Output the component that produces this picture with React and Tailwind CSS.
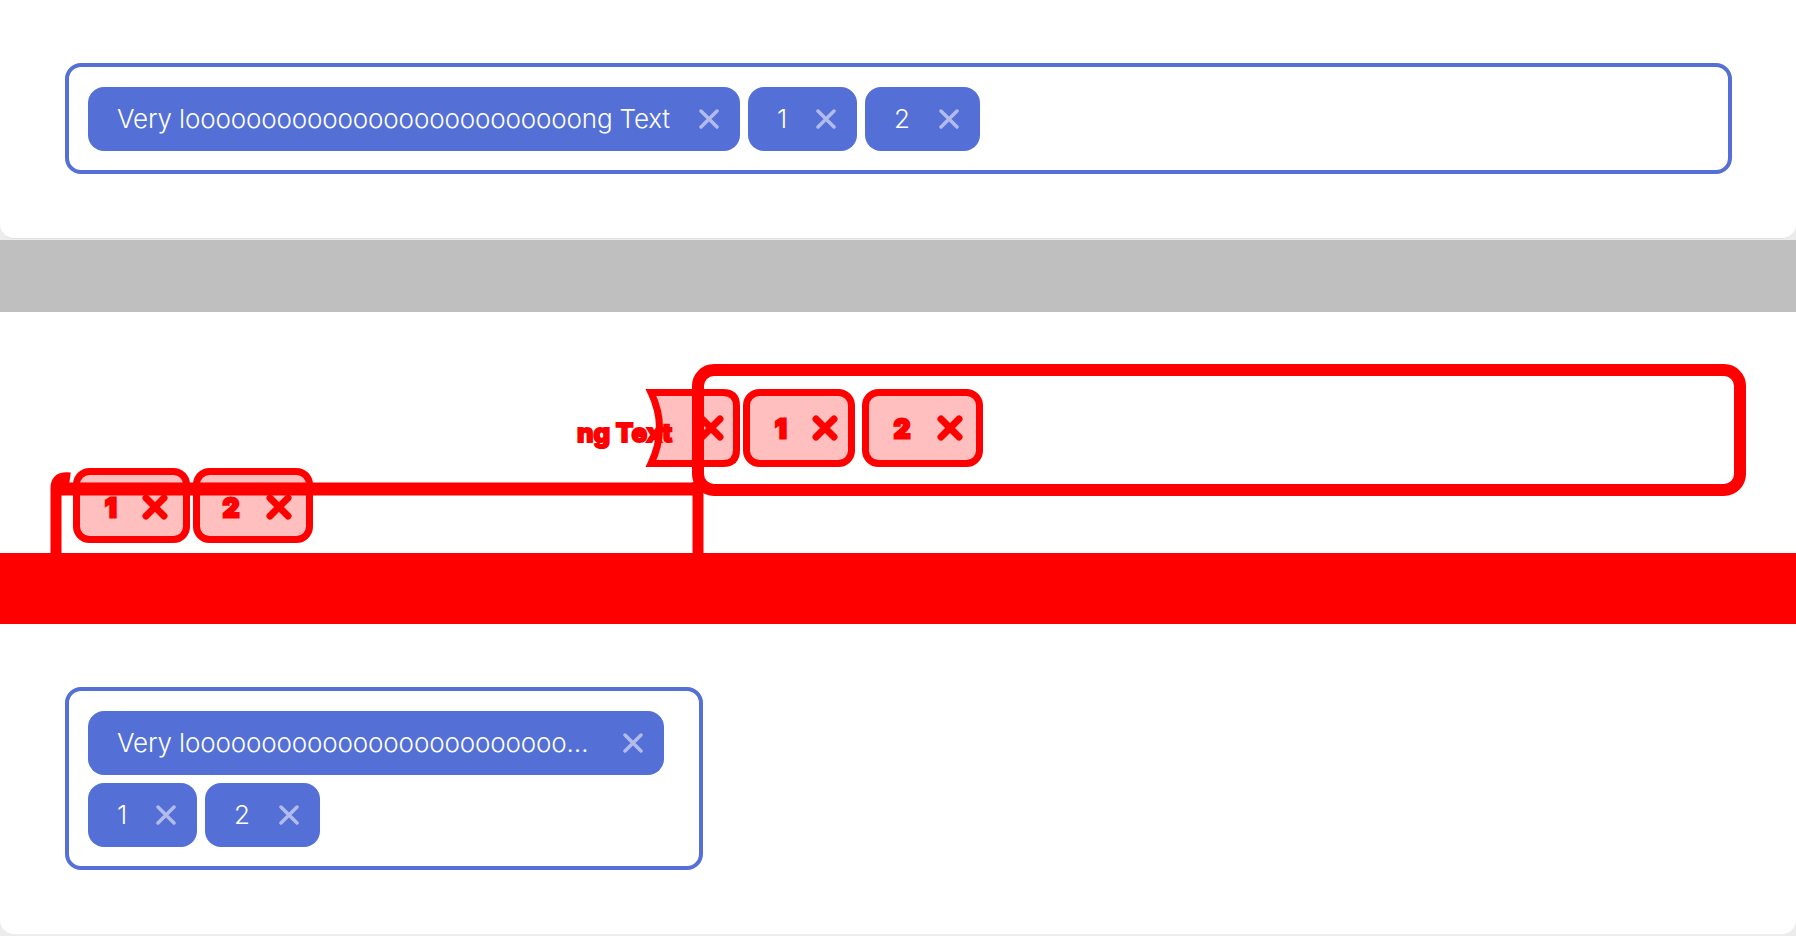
import clsx from 'clsx';

const LONG_LABEL = 'Very l' + 'o'.repeat(26) + 'ng Text';
const TAGS = [LONG_LABEL, '1', '2'];

const CloseIcon = () => (
  <svg width="20" height="20" viewBox="0 0 20 20" className="shrink-0">
    <path d="M2 2 18 18M18 2 2 18" stroke="#b2bbec" strokeWidth="3.5" strokeLinecap="round" />
  </svg>
);

const Tag = ({ label, narrow }) => (
  <div
    className={clsx(
      'flex h-16 items-center gap-[29px] rounded-2xl bg-[#5470d6] pl-[29px] pr-[21px] text-[26px] font-light leading-none tracking-[-0.15px] text-white',
      narrow && 'min-w-0 max-w-[calc(100%-16px)]'
    )}
  >
    <span className={narrow ? 'truncate leading-[1.3]' : 'whitespace-nowrap'}>{label}</span>
    <CloseIcon />
  </div>
);

const TagBox = ({ className }) => (
  <div className={clsx('flex flex-wrap gap-2 rounded-2xl border-4 border-[#5470d6] px-[19px] pb-[19px] pt-5', className)}>
    {TAGS.map((label) => (
      <Tag key={label} label={label} narrow />
    ))}
  </div>
);

// red/pink overlay that the visual diff produced
const DiffCross = ({ cx, cy }) => (
  <path
    d={`M${cx - 9} ${cy - 9} ${cx + 9} ${cy + 9}M${cx + 9} ${cy - 9} ${cx - 9} ${cy + 9}`}
    stroke="#ff0000"
    strokeWidth="7"
    strokeLinecap="round"
  />
);

const DiffGlyph = ({ x, y, children }) => (
  <text
    x={x}
    y={y}
    textAnchor="middle"
    dominantBaseline="central"
    fontSize="26"
    fontWeight="800"
    fill="#ff0000"
    stroke="#ff0000"
    strokeWidth="3"
  >
    {children}
  </text>
);

const DiffChip = ({ x, y, w, h, label, textX, crossX, cy }) => (
  <g>
    <rect x={x} y={y} width={w} height={h} rx="13" fill="#ffbfbf" stroke="#ff0000" strokeWidth="7" />
    <DiffGlyph x={textX} y={cy}>{label}</DiffGlyph>
    <DiffCross cx={crossX} cy={cy} />
  </g>
);

const DiffView = () => (
  <svg width="1796" height="241" viewBox="0 0 1796 241" className="block font-['Inter',sans-serif]">
    {/* wrapped version, lower left */}
    <DiffChip x={76.5} y={159.5} w={110} h={68} label="1" textX={111} crossX={155} cy={195} />
    <DiffChip x={196.5} y={159.5} w={113} h={68} label="2" textX={231} crossX={279} cy={195} />
    <path d="M56 241V176Q56 164 70 166" fill="none" stroke="#ff0000" strokeWidth="11" />
    <line x1="60" y1="177" x2="700" y2="177" stroke="#ff0000" strokeWidth="13" />

    {/* shifted single row */}
    <path
      d="M651 80.5H723Q736.5 80.5 736.5 94V138Q736.5 151.5 723 151.5H651Q668 116 651 80.5Z"
      fill="#ffbfbf"
      stroke="#ff0000"
      strokeWidth="7"
    />
    <text x="577" y="130" fontSize="26" fontWeight="800" fill="#ff0000" stroke="#ff0000" strokeWidth="2">
      ng Text
    </text>
    <DiffCross cx={711} cy={116} />
    <DiffChip x={746.5} y={80.5} w={105} h={71} label="1" textX={781} crossX={825} cy={116} />
    <DiffChip x={865.5} y={80.5} w={114} h={71} label="2" textX={902} crossX={950} cy={116} />
    <rect x="698" y="58" width="1042" height="120" rx="16" fill="none" stroke="#ff0000" strokeWidth="12" />
    <line x1="698" y1="170" x2="698" y2="241" stroke="#ff0000" strokeWidth="11" />
  </svg>
);

export default function App() {
  return (
    <div className="w-[1796px] font-['Inter',sans-serif]">
      <div className="h-[240px] bg-[#ececec]">
        <div className="h-[239px] rounded-b-[14px] border-b border-[#e2e2e2] bg-white pl-[65px] pr-[64px] pt-[63px]">
          <TagBox />
        </div>
      </div>

      <div className="h-[72px] bg-[#bfbfbf]" />

      <div className="bg-white">
        <DiffView />
      </div>
      <div className="h-[71px] bg-[#ff0000]" />

      <div className="h-[312px] bg-[#ececec]">
        <div className="h-[310px] rounded-b-[14px] bg-white pl-[65px] pt-[63px]">
          <TagBox className="w-[638px]" />
        </div>
      </div>
    </div>
  );
}
